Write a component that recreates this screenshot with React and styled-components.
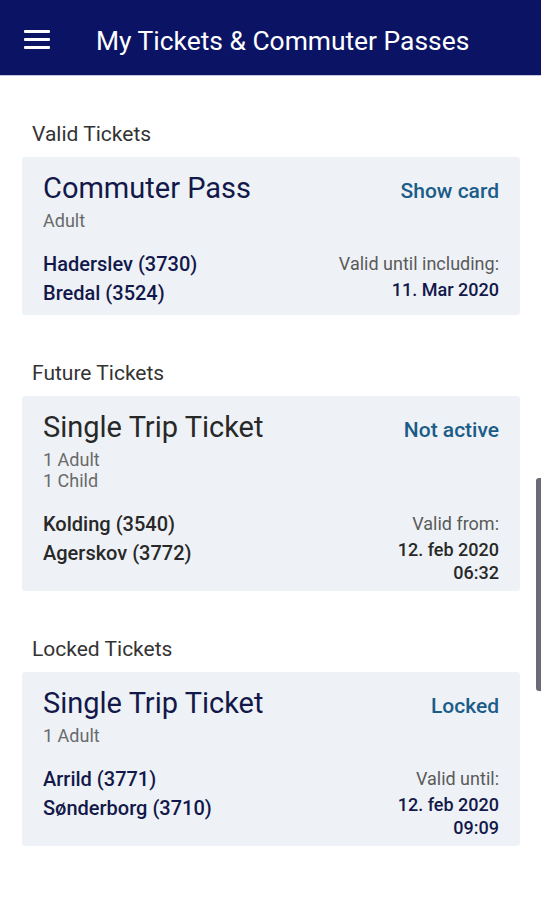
import styled, { createGlobalStyle } from 'styled-components';

const GlobalStyle = createGlobalStyle`
    body {
        margin: 0;
        background: #ffffff;
        font-family: Roboto, "Noto Sans", sans-serif;
    }
`;

const tickets = [
    {
        section: 'Valid Tickets',
        title: 'Commuter Pass',
        status: 'Show card',
        riders: ['Adult'],
        from: 'Haderslev (3730)',
        to: 'Bredal (3524)',
        validLabel: 'Valid until including:',
        validValue: ['11. Mar 2020'],
        tone: 'navy',
    },
    {
        section: 'Future Tickets',
        title: 'Single Trip Ticket',
        status: 'Not active',
        riders: ['1 Adult', '1 Child'],
        from: 'Kolding (3540)',
        to: 'Agerskov (3772)',
        validLabel: 'Valid from:',
        validValue: ['12. feb 2020', '06:32'],
        tone: 'dark',
    },
    {
        section: 'Locked Tickets',
        title: 'Single Trip Ticket',
        status: 'Locked',
        riders: ['1 Adult'],
        from: 'Arrild (3771)',
        to: 'Sønderborg (3710)',
        validLabel: 'Valid until:',
        validValue: ['12. feb 2020', '09:09'],
        tone: 'navy',
    },
];

const App = () => {
    return (
        <Screen>
            <GlobalStyle />
            <TopBar>
                <MenuButton aria-label="menu">
                    <MenuLine />
                    <MenuLine />
                    <MenuLine />
                </MenuButton>
                <BarTitle>My Tickets &amp; Commuter Passes</BarTitle>
            </TopBar>
            <List>
                {tickets.map((t) => (
                    <Section key={t.section}>
                        <SectionLabel>{t.section}</SectionLabel>
                        <Card>
                            <CardHead>
                                <CardTitle tone={t.tone}>{t.title}</CardTitle>
                                <Status>{t.status}</Status>
                            </CardHead>
                            <Riders>
                                {t.riders.map((r) => (
                                    <Rider key={r}>{r}</Rider>
                                ))}
                            </Riders>
                            <CardBody>
                                <Route>
                                    <Stop tone={t.tone}>{t.from}</Stop>
                                    <Stop tone={t.tone}>{t.to}</Stop>
                                </Route>
                                <Validity>
                                    <ValidLabel>{t.validLabel}</ValidLabel>
                                    {t.validValue.map((v) => (
                                        <ValidValue key={v} tone={t.tone}>{v}</ValidValue>
                                    ))}
                                </Validity>
                            </CardBody>
                        </Card>
                    </Section>
                ))}
            </List>
            <ScrollThumb />
        </Screen>
    );
};

const textColor = (tone) => (tone === 'dark' ? '#282828' : '#13184a');

const Screen = styled.div`
    position: relative;
    width: 541px;
    height: 900px;
    overflow: hidden;
    background: #ffffff;
`;

const TopBar = styled.header`
    height: 76px;
    box-sizing: border-box;
    padding-top: 7px;
    display: flex;
    align-items: center;
    background: #0b1464;
    border-bottom: 1px solid #c3c9e0;
`;

const MenuButton = styled.div`
    width: 26px;
    margin-left: 24px;
    margin-right: 46px;
    margin-top: -3px;
    display: flex;
    flex-direction: column;
    gap: 5px;
`;

const MenuLine = styled.span`
    display: block;
    height: 3px;
    background: #ffffff;
    border-radius: 1px;
`;

const BarTitle = styled.h1`
    margin: 0;
    color: #ffffff;
    font-size: 26.4px;
    font-weight: 400;
`;

const List = styled.main`
    padding: 0 21px 0 22px;
`;

const Section = styled.section`
    margin-top: 46px;
`;

const SectionLabel = styled.div`
    padding-left: 10px;
    font-size: 21px;
    line-height: 24px;
    color: #333333;
    margin-bottom: 11px;
`;

const Card = styled.div`
    background: #eef2f6;
    border-radius: 3px;
    padding: 14px 21px 7px 21px;
`;

const CardHead = styled.div`
    display: flex;
    justify-content: space-between;
    align-items: baseline;
`;

const CardTitle = styled.div`
    font-size: 29px;
    line-height: 34px;
    font-weight: 400;
    color: ${(p) => textColor(p.tone)};
`;

const Status = styled.div`
    font-size: 21px;
    font-weight: 500;
    color: #1b5c88;
`;

const Riders = styled.div`
    margin-top: 5px;
    display: flex;
    flex-direction: column;
`;

const Rider = styled.div`
    font-size: 18px;
    line-height: 21px;
    color: #6a6a6a;
`;

const CardBody = styled.div`
    margin-top: 19px;
    display: flex;
    justify-content: space-between;
    align-items: flex-start;
`;

const Route = styled.div`
    display: flex;
    flex-direction: column;
`;

const Stop = styled.div`
    font-size: 20px;
    line-height: 29px;
    font-weight: 500;
    color: ${(p) => textColor(p.tone)};
`;

const Validity = styled.div`
    display: flex;
    flex-direction: column;
    align-items: flex-end;
    text-align: right;
`;

const ValidLabel = styled.div`
    font-size: 18px;
    line-height: 28px;
    color: #5a5a5a;
`;

const ValidValue = styled.div`
    font-size: 18px;
    line-height: 23px;
    font-weight: 500;
    color: ${(p) => textColor(p.tone)};
`;

const ScrollThumb = styled.div`
    position: absolute;
    right: 0;
    top: 478px;
    width: 5px;
    height: 213px;
    background: #6b6b78;
    border-radius: 3px 0 0 3px;
`;

export default App;
